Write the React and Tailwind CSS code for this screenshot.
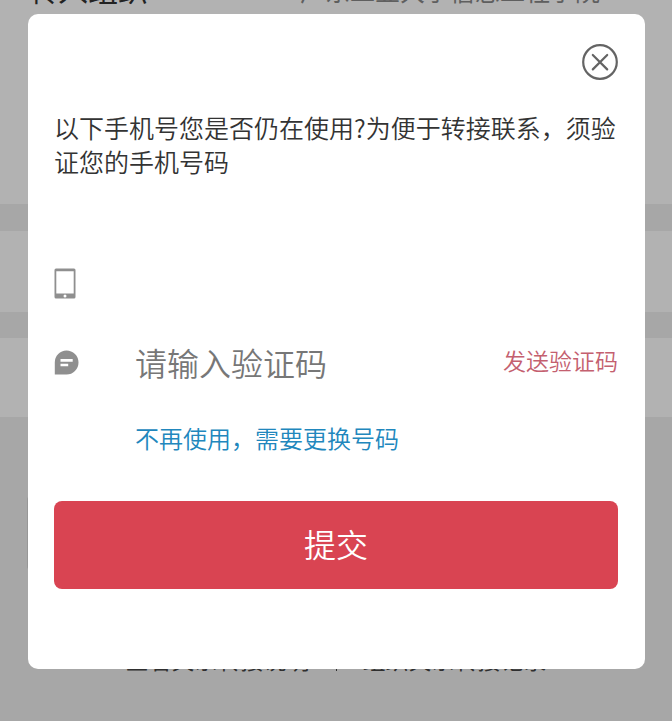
import React, { useState } from 'react';

function CloseIcon() {
  return (
    <svg viewBox="0 0 36 36" className="h-9 w-9" fill="none" stroke="#646464" strokeWidth="2.2" strokeLinecap="round">
      <circle cx="18" cy="18" r="16.8" />
      <path d="M10.8 11 L25.2 25.4 M25.2 11 L10.8 25.4" />
    </svg>
  );
}

function PhoneIcon() {
  return (
    <svg viewBox="0 0 22 31" className="h-[31px] w-[22px]">
      <path
        fill="#8f8f8f"
        fillRule="evenodd"
        d="M2 0.5H20Q21.5 0.5 21.5 2V29Q21.5 30.5 20 30.5H2Q0.5 30.5 0.5 29V2Q0.5 0.5 2 0.5ZM2.3 3.3V25.6H19.7V3.3Z"
      />
      <circle cx="11" cy="28" r="1.5" fill="#fff" />
    </svg>
  );
}

function MessageIcon() {
  return (
    <svg viewBox="0 0 25 25" className="h-[25px] w-[25px]">
      <path fill="#8f8f8f" d="M12.5 0.5A12 12 0 1 1 12.5 24.5H0.8V12.5A12 12 0 0 1 12.5 0.5Z" />
      <path d="M6.5 10.4H18.7M6.5 15H14.2" stroke="#fff" strokeWidth="2.6" />
    </svg>
  );
}

// The transfer form that stays visible behind the dialog
function TransferPage() {
  return (
    <div className="flex min-h-screen flex-col bg-[#f0f0f0]" aria-hidden="true">
      <div className="flex h-[204px] items-start justify-between bg-white pl-7 pr-[72px]">
        <span className="-mt-7 text-[30px] leading-8 text-[#333]">转入组织</span>
        <span className="-mt-[26px] text-[25px] leading-8 text-[#888]">广东工业大学信息工程学院</span>
      </div>
      <div className="mt-[27px] h-[81px] bg-white" />
      <div className="mt-[26px] h-[79px] bg-white" />
      <div className="mx-[27px] mt-[79px] h-[74px] rounded bg-[#d8d8d8]" />
      <div className="mt-[73px] flex items-center justify-center gap-[26px] text-[23px] leading-8 text-[#444]">
        <span>查看关系转接说明</span>
        <span className="h-6 w-px bg-[#444]" />
        <span>组织关系转接记录</span>
      </div>
    </div>
  );
}

export default function App() {
  const [code, setCode] = useState('');

  return (
    <div className="relative font-['Noto_Sans_CJK_SC',sans-serif]">
      <TransferPage />

      <div className="absolute inset-0 bg-black/30 pb-[52px] pl-7 pr-[27px] pt-[14px]">
        <div role="dialog" aria-modal="true" aria-labelledby="verify-title" className="rounded-[10px] bg-white pb-20 pl-[26px] pr-[27px] pt-[30px]">
          <div className="flex justify-end">
            <button type="button" aria-label="关闭">
              <CloseIcon />
            </button>
          </div>

          <h1 id="verify-title" className="mt-[30px] text-[25px] font-[350] leading-[34px] text-[#333]">
            以下手机号您是否仍在使用?为便于转接联系，须验证您的手机号码
          </h1>

          <form onSubmit={(e) => e.preventDefault()}>
            <div className="mt-[88px] flex h-[34px] items-center">
              <PhoneIcon />
            </div>

            <div className="mt-[38px] flex h-12 items-center">
              <label htmlFor="code" className="w-[81px] shrink-0" aria-label="验证码">
                <MessageIcon />
              </label>
              <input
                id="code"
                type="text"
                value={code}
                onChange={(e) => setCode(e.target.value)}
                placeholder="请输入验证码"
                className="min-w-0 flex-1 text-[32px] font-[350] leading-12 text-[#333] outline-none placeholder:text-[#777]"
              />
              <button type="button" className="shrink-0 pb-1 text-[23px] font-[350] leading-8 text-[#c4606f]">
                发送验证码
              </button>
            </div>

            <a href="#change" className="ml-[81px] mt-9 block text-[24px] font-[350] leading-8 text-[#2187bd]">
              不再使用，需要更换号码
            </a>

            <button type="submit" className="mt-[47px] h-[88px] w-full rounded-lg bg-[#d94452] pb-1 text-[32px] font-[350] text-white">
              提交
            </button>
          </form>
        </div>
      </div>
    </div>
  );
}
